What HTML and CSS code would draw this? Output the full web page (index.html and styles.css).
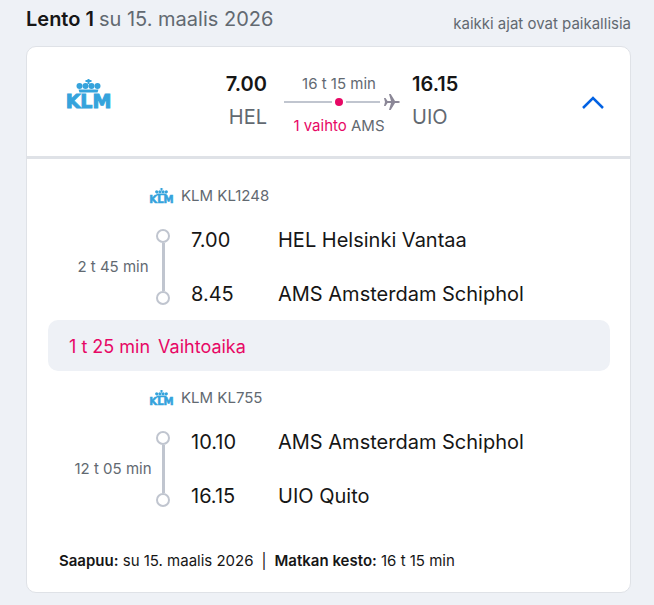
FILE: index.html
```
<!DOCTYPE html>
<html lang="fi">
<head>
  <meta charset="UTF-8">
  <title>Lento 1</title>
  <meta name="viewport" content="width=device-width, initial-scale=1.0">
  <link rel="stylesheet" href="styles.css">
</head>
<body>
  <header class="page-header">
    <h1 class="title">Lento 1 <span class="date">su 15. maalis 2026</span></h1>
    <p class="note">kaikki ajat ovat paikallisia</p>
  </header>

  <main class="card">
    <div class="summary">
      <svg class="logo" viewBox="0 0 50 30" role="img" aria-label="KLM">
        <path d="M24 0h2v1h2v2h-2v2h-2V3h-2V1h2z"/>
        <circle cx="16" cy="7" r="3"/>
        <circle cx="22" cy="7" r="3"/>
        <circle cx="28" cy="7" r="3"/>
        <circle cx="34" cy="7" r="3"/>
        <path d="M15 10.500h20l-1 3H16z"/>
        <text x="25" y="29" text-anchor="middle">KLM</text>
      </svg>
      <div class="endpoint departure">
        <strong>7.00</strong>
        <span>HEL</span>
      </div>
      <div class="route">
        <span>16 t 15 min</span>
        <div class="route-line">
          <i class="dash"></i>
          <i class="dot"></i>
          <i class="dash short"></i>
          <svg class="plane" viewBox="0 0 16 16" aria-hidden="true">
            <path d="M0 4h1.500L3.500 7H7L5 0h1.700L11 7h3.500q1.500 .4 1.500 1t-1.500 1H11L6.700 16H5L7 9H3.500L1.500 12H0L1 8z"/>
          </svg>
        </div>
        <span><span class="accent">1 vaihto</span> AMS</span>
      </div>
      <div class="endpoint">
        <strong>16.15</strong>
        <span>UIO</span>
      </div>
      <button class="toggle" type="button" aria-label="Piilota tiedot" aria-expanded="true">
        <svg viewBox="0 0 22 13" aria-hidden="true"><path d="M1 12L11 2l10 10"/></svg>
      </button>
    </div>

    <section class="leg">
      <div class="leg-header">
        <svg class="logo logo-small" viewBox="0 0 50 30" aria-hidden="true">
          <path d="M24 0h2v1h2v2h-2v2h-2V3h-2V1h2z"/>
          <circle cx="16" cy="7" r="3"/>
          <circle cx="22" cy="7" r="3"/>
          <circle cx="28" cy="7" r="3"/>
          <circle cx="34" cy="7" r="3"/>
          <path d="M15 10.500h20l-1 3H16z"/>
          <text x="25" y="29" text-anchor="middle">KLM</text>
        </svg>
        <span>KLM KL1248</span>
      </div>
      <div class="leg-body">
        <span class="duration">2 t 45 min</span>
        <div class="rail"><i class="node"></i><i class="bar"></i><i class="node"></i></div>
        <div class="stops">
          <span>7.00</span><span>HEL Helsinki Vantaa</span>
          <span>8.45</span><span>AMS Amsterdam Schiphol</span>
        </div>
      </div>
    </section>

    <div class="transfer"><span>1 t 25 min</span><span>Vaihtoaika</span></div>

    <section class="leg">
      <div class="leg-header">
        <svg class="logo logo-small" viewBox="0 0 50 30" aria-hidden="true">
          <path d="M24 0h2v1h2v2h-2v2h-2V3h-2V1h2z"/>
          <circle cx="16" cy="7" r="3"/>
          <circle cx="22" cy="7" r="3"/>
          <circle cx="28" cy="7" r="3"/>
          <circle cx="34" cy="7" r="3"/>
          <path d="M15 10.500h20l-1 3H16z"/>
          <text x="25" y="29" text-anchor="middle">KLM</text>
        </svg>
        <span>KLM KL755</span>
      </div>
      <div class="leg-body">
        <span class="duration">12 t 05 min</span>
        <div class="rail"><i class="node"></i><i class="bar"></i><i class="node"></i></div>
        <div class="stops">
          <span>10.10</span><span>AMS Amsterdam Schiphol</span>
          <span>16.15</span><span>UIO Quito</span>
        </div>
      </div>
    </section>

    <footer class="total">
      <span><b>Saapuu:</b> su 15. maalis 2026</span>
      <span>|</span>
      <span><b>Matkan kesto:</b> 16 t 15 min</span>
    </footer>
  </main>
</body>
</html>
```
FILE: styles.css
```
* {
  box-sizing: border-box;
}
body {
  margin: 0;
  padding: 5px 23px 12px 26px;
  background: #eef1f6;
  color: #161616;
  font-family: Inter, "Liberation Sans", sans-serif;
  font-size: 15px;
  line-height: 20px;
}
.page-header {
  display: flex;
  justify-content: space-between;
  align-items: flex-end;
  margin-bottom: 12px;
  color: #626971;
}
.title {
  margin: 0;
  padding-bottom: 1px;
  font-size: 20px;
  line-height: 28px;
  font-weight: 600;
  color: #161616;
}
.date {
  font-weight: 400;
  color: #626971;
}
.note {
  margin: 0;
}
.card {
  background: #fff;
  border: 1px solid #dfe2e7;
  border-radius: 10px;
}
.summary {
  display: flex;
  align-items: flex-start;
  padding: 21px 26px 20px 36px;
  border-bottom: 3px solid #dfe2e7;
  color: #626971;
}
.logo {
  flex: none;
  width: 51px;
  height: 30px;
  margin-top: 11px;
  overflow: visible;
  fill: #35a3dc;
}
.logo text {
  font: bold 19px "DejaVu Sans", sans-serif;
  stroke: #35a3dc;
  stroke-width: 1px;
}
.endpoint {
  display: flex;
  flex-direction: column;
  font-size: 20px;
  line-height: 33px;
}
.endpoint strong {
  font-weight: 600;
  color: #161616;
}
.departure {
  width: 153px;
  text-align: right;
}
.route {
  display: flex;
  flex-direction: column;
  width: 116px;
  margin: 6px 12px 0 17px;
}
.route > span {
  width: 110px;
  text-align: center;
}
.route-line {
  display: flex;
  align-items: center;
  height: 16px;
  margin-bottom: 6px;
}
.dash {
  width: 48px;
  height: 2px;
  background: #c0c5cf;
}
.short {
  width: 34px;
}
.dot {
  width: 8px;
  height: 8px;
  margin: 0 3px;
  border-radius: 50%;
  background: #e70865;
}
.plane {
  width: 16px;
  height: 16px;
  margin-left: 4px;
  fill: #8b8797;
}
.accent {
  color: #e70865;
}
.toggle {
  width: 22px;
  margin: 28px 0 0 auto;
  padding: 0;
  border: 0;
  background: none;
}
.toggle svg {
  display: block;
  fill: none;
  stroke: #0362e3;
  stroke-width: 2.5;
}
.leg {
  padding-top: 27px;
}
.leg-header {
  display: flex;
  align-items: center;
  gap: 6px;
  margin-bottom: 20px;
  padding-left: 121px;
  color: #626971;
}
.logo-small {
  width: 27px;
  height: 16px;
  margin-top: 0;
}
.leg-body {
  display: flex;
  align-items: center;
  padding-left: 43px;
}
.duration {
  width: 86px;
  text-align: center;
  color: #626971;
}
.rail {
  display: flex;
  flex-direction: column;
  align-items: center;
  width: 14px;
  height: 76px;
  margin-right: 21px;
}
.node {
  width: 14px;
  height: 14px;
  border: 2px solid #c0c5cf;
  border-radius: 50%;
}
.bar {
  flex: 1;
  width: 3px;
  background: #c0c5cf;
}
.stops {
  display: grid;
  grid-template-columns: 87px 1fr;
  flex: 1;
  row-gap: 26px;
  font-size: 20px;
  line-height: 28px;
}
.transfer {
  display: flex;
  gap: 8px;
  margin: 12px 20px 0 21px;
  padding: 13px 21px 10px;
  border-radius: 10px;
  background: #eef1f6;
  color: #e70865;
  font-size: 18px;
  line-height: 28px;
}
.transfer + .leg {
  padding-top: 17px;
}
.total {
  display: flex;
  gap: 8px;
  padding: 41px 32px 21px;
}
.total b {
  font-weight: 600;
}
```
